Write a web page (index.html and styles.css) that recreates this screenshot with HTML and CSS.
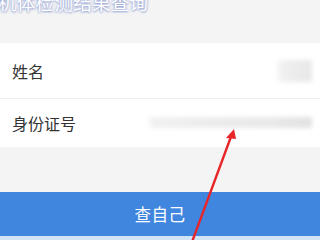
FILE: index.html
```html
<!DOCTYPE html>
<html lang="zh">
<head>
<meta charset="utf-8">
<link rel="stylesheet" href="styles.css">
</head>
<body>
<div class="page">
  <div class="title"><span class="title-text">机体检测结果查询</span></div>
  <div class="card">
    <div class="row row-name">
      <span class="label">姓名</span>
      <span class="blur blur-name"></span>
    </div>
    <div class="divider"></div>
    <div class="row row-id">
      <span class="label">身份证号</span>
      <span class="blur blur-id"></span>
    </div>
  </div>
  <div class="spacer"></div>
  <div class="button">查自己</div>
  <div class="strip"></div>
  <svg class="arrow" width="320" height="240" viewBox="0 0 320 240">
    <line x1="192" y1="242" x2="232" y2="134" stroke="#e8262a" stroke-width="2.4" stroke-linecap="round"/>
    <polygon points="234,129 226,138 236,139" fill="#e8262a"/>
  </svg>
</div>
</body>
</html>
```
FILE: styles.css
```css
html, body {
  margin: 0;
  padding: 0;
}
body {
  width: 320px;
  height: 240px;
  overflow: hidden;
  background: #f4f4f4;
  font-family: "Noto Sans CJK SC", "Noto Sans", sans-serif;
}
.page {
  position: relative;
  width: 320px;
  height: 240px;
  display: flex;
  flex-direction: column;
}
.title {
  height: 43px;
  overflow: hidden;
  flex: none;
}
.title-text {
  display: block;
  margin-top: -10px;
  margin-left: -2px;
  font-size: 18.5px;
  line-height: 24px;
  color: #ffffff;
  letter-spacing: 0.3px;
  text-shadow: 0 0 3px rgba(110, 130, 200, 0.7), 0 1px 2px rgba(110, 130, 200, 0.6);
}
.card {
  background: #ffffff;
  flex: none;
}
.row {
  display: flex;
  align-items: center;
  padding-left: 12px;
  position: relative;
}
.row-name {
  height: 55px;
}
.row-id {
  height: 48px;
}
.divider {
  height: 1px;
  background: #eeeeee;
}
.label {
  font-size: 16px;
  color: #333333;
  line-height: 20px;
}
.blur {
  position: absolute;
  filter: blur(2px);
}
.blur-name {
  right: 8px;
  top: 17px;
  width: 34px;
  height: 22px;
  background: linear-gradient(90deg, #f2f2f2, #ececec 50%, #e8e8e8);
}
.blur-id {
  left: 150px;
  right: 8px;
  top: 18px;
  height: 11px;
  background: linear-gradient(90deg, #f1f1f1, #ececec 40%, #e9e9e9 75%, #e2e2e2);
}
.spacer {
  height: 45px;
  flex: none;
}
.button {
  height: 44px;
  flex: none;
  background: #4086de;
  color: #ffffff;
  font-size: 16.5px;
  display: flex;
  align-items: center;
  justify-content: center;
  letter-spacing: 0.5px;
}
.strip {
  flex: 1;
  background: #d3e3f6;
}
.arrow {
  position: absolute;
  left: 0;
  top: 0;
}
```
